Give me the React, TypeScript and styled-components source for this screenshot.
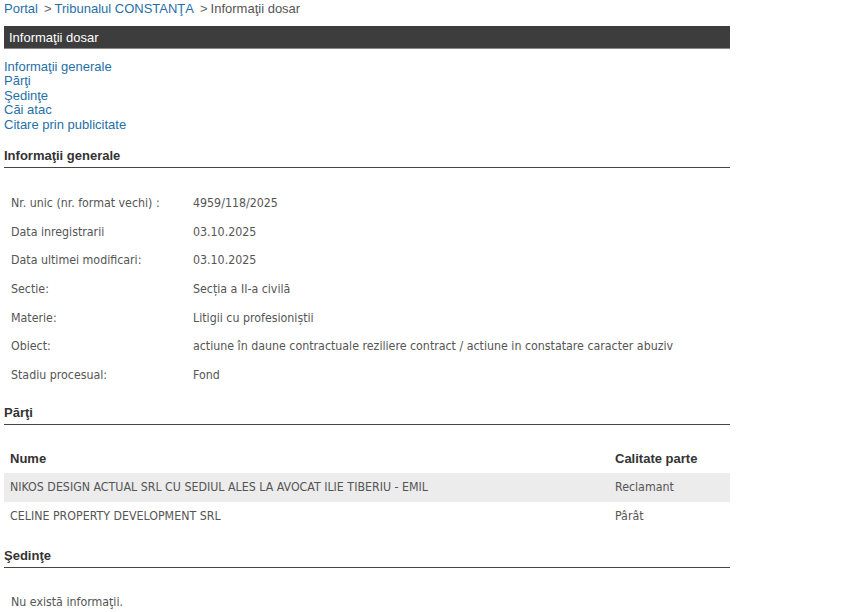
import React from "react";
import styled, { createGlobalStyle } from "styled-components";

const Global = createGlobalStyle`
  html, body { margin: 0; padding: 0; background: #fff; }
  body { font-family: "Liberation Sans", Arial, sans-serif; }
`;

const Page = styled.div`
  width: 726px;
  padding: 0 0 0 4px;
`;

const Breadcrumb = styled.div`
  font-size: 13px;
  line-height: 16px;
  padding-top: 1px;
  color: #555;
`;

const Crumb = styled.a`
  color: #1f6fa8;
  text-decoration: none;
`;

const Sep = styled.span`
  color: #666;
  margin: 0 3px 0 6px;
`;

const TitleBar = styled.div`
  margin-top: 9px;
  height: 23px;
  background: #3d3d3d;
  color: #fff;
  font-size: 13px;
  line-height: 24px;
  padding-left: 5px;
  border-bottom: 1px solid #888;
  box-sizing: border-box;
`;

const NavList = styled.div`
  display: flex;
  flex-direction: column;
  margin-top: 10.5px;
`;

const NavLink = styled.a`
  color: #1f6fa8;
  font-size: 13px;
  line-height: 14.5px;
  text-decoration: none;
`;

const SectionHead = styled.div<{ $top: number }>`
  margin-top: ${(p) => p.$top}px;
  font-weight: bold;
  font-size: 13px;
  color: #333;
  line-height: 16px;
  padding-bottom: 3px;
  border-bottom: 1px solid #444;
`;

const dataFont = `"DejaVu Sans Condensed", "DejaVu Sans", sans-serif`;

const InfoGrid = styled.div`
  display: grid;
  grid-template-columns: 182px 1fr;
  padding: 27.5px 0 0 7px;
  font-family: ${dataFont};
  font-size: 12.3px;
  color: #555;
`;

const Cell = styled.div`
  height: 28.7px;
  line-height: 16px;
  white-space: nowrap;
`;

const Table = styled.div`
  margin-top: 20px;
  display: flex;
  flex-direction: column;
`;

const TRow = styled.div<{ $shade?: boolean; $head?: boolean }>`
  display: grid;
  grid-template-columns: 1fr 115px;
  height: ${(p) => (p.$head ? 28 : 29)}px;
  align-items: center;
  background: ${(p) => (p.$shade ? "#ececec" : "transparent")};
  padding-left: 6px;
  white-space: nowrap;
  font-family: ${(p) => (p.$head ? `"Liberation Sans", Arial, sans-serif` : dataFont)};
  font-weight: ${(p) => (p.$head ? "bold" : "normal")};
  font-size: ${(p) => (p.$head ? "13px" : "12.3px")};
  color: ${(p) => (p.$head ? "#333" : "#555")};
`;

const Empty = styled.div`
  margin-top: 27px;
  padding-left: 7px;
  font-family: ${dataFont};
  font-size: 12.3px;
  color: #555;
`;

const info: [string, string][] = [
  ["Nr. unic (nr. format vechi) :", "4959/118/2025"],
  ["Data inregistrarii", "03.10.2025"],
  ["Data ultimei modificari:", "03.10.2025"],
  ["Sectie:", "Secția a II-a civilă"],
  ["Materie:", "Litigii cu profesioniștii"],
  ["Obiect:", "actiune în daune contractuale reziliere contract / actiune in constatare caracter abuziv"],
  ["Stadiu procesual:", "Fond"],
];

const parti: [string, string][] = [
  ["NIKOS DESIGN ACTUAL SRL CU SEDIUL ALES LA AVOCAT ILIE TIBERIU - EMIL", "Reclamant"],
  ["CELINE PROPERTY DEVELOPMENT SRL", "Pârât"],
];

export default function App() {
  return (
    <Page>
      <Global />
      <Breadcrumb>
        <Crumb href="#">Portal</Crumb>
        <Sep>&gt;</Sep>
        <Crumb href="#">Tribunalul CONSTANŢA</Crumb>
        <Sep>&gt;</Sep>
        Informaţii dosar
      </Breadcrumb>
      <TitleBar>Informaţii dosar</TitleBar>
      <NavList>
        <NavLink href="#">Informaţii generale</NavLink>
        <NavLink href="#">Părţi</NavLink>
        <NavLink href="#">Şedinţe</NavLink>
        <NavLink href="#">Căi atac</NavLink>
        <NavLink href="#">Citare prin publicitate</NavLink>
      </NavList>
      <SectionHead $top={15.5}>Informaţii generale</SectionHead>
      <InfoGrid>
        {info.map(([k, v]) => (
          <React.Fragment key={k}>
            <Cell>{k}</Cell>
            <Cell>{v}</Cell>
          </React.Fragment>
        ))}
      </InfoGrid>
      <SectionHead $top={9}>Părţi</SectionHead>
      <Table>
        <TRow $head>
          <span>Nume</span>
          <span>Calitate parte</span>
        </TRow>
        {parti.map(([n, c], i) => (
          <TRow key={n} $shade={i === 0}>
            <span>{n}</span>
            <span>{c}</span>
          </TRow>
        ))}
      </Table>
      <SectionHead $top={17}>Şedinţe</SectionHead>
      <Empty>Nu există informaţii.</Empty>
    </Page>
  );
}
